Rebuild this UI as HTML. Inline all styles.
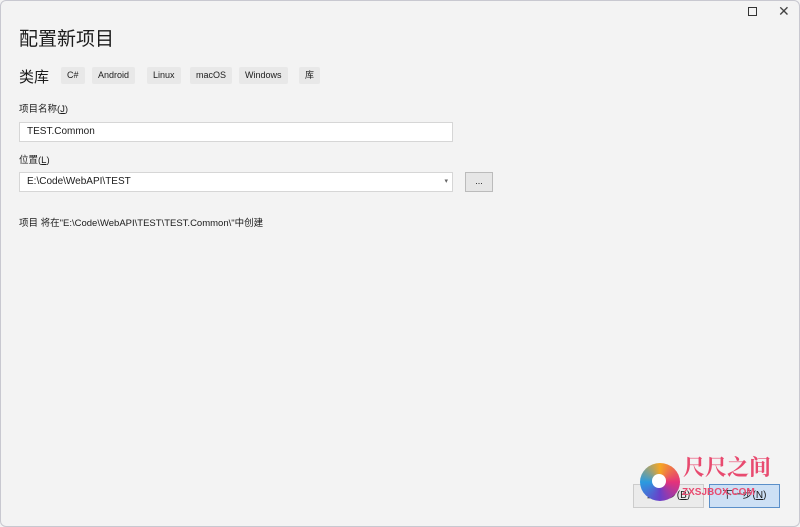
<!DOCTYPE html>
<html><head><meta charset="utf-8"><style>
*{margin:0;padding:0;box-sizing:border-box}
body{width:800px;height:527px;background:#f3f3f3;font-family:"Liberation Sans","Noto Sans CJK SC",sans-serif;color:#1b1b1b;position:relative;overflow:hidden}
.frame{position:absolute;left:0;top:0;width:800px;height:527px;border:1px solid #c8c8d0;border-radius:6px}
.a{position:absolute;white-space:nowrap}
.tag{position:absolute;top:67px;height:17px;background:#e8e8e8;font-size:9px;line-height:17px;padding:0 6px;border-radius:2px}
.in{position:absolute;left:19px;width:434px;height:20px;background:#fff;border:1px solid #d6d6d6;font-size:10px;line-height:18px;padding-left:7px}
</style></head><body>
<div class="frame"></div>
<div class="a" style="left:748px;top:7px;width:9px;height:9px;border:1px solid #333"></div>
<div class="a" style="left:778px;top:3px;font-size:14px;color:#444">✕</div>
<div class="a" style="left:19px;top:24px;font-size:19px">配置新项目</div>
<div class="a" style="left:19px;top:66px;font-size:15px">类库</div>
<div class="tag" style="left:61px">C#</div>
<div class="tag" style="left:92px">Android</div>
<div class="tag" style="left:147px">Linux</div>
<div class="tag" style="left:190px">macOS</div>
<div class="tag" style="left:239px">Windows</div>
<div class="tag" style="left:299px">库</div>
<div class="a" style="left:19px;top:101px;font-size:9.5px">项目名称(<u>J</u>)</div>
<div class="in" style="top:122px">TEST.Common</div>
<div class="a" style="left:19px;top:152px;font-size:9.5px">位置(<u>L</u>)</div>
<div class="in" style="top:172px">E:\Code\WebAPI\TEST<span style="position:absolute;right:4px;font-size:7px;color:#666">▾</span></div>
<div class="a" style="left:465px;top:172px;width:28px;height:20px;background:#e6e6e6;border:1px solid #bbb;font-size:9px;text-align:center;line-height:16px">...</div>
<div class="a" style="left:19px;top:215px;font-size:9.5px">项目 将在"E:\Code\WebAPI\TEST\TEST.Common\"中创建</div>
<div class="a" style="left:633px;top:484px;width:71px;height:24px;background:#ebebeb;border:1px solid #ccc;font-size:10px;text-align:center;line-height:22px">上一步(<u>B</u>)</div>
<div class="a" style="left:709px;top:484px;width:71px;height:24px;background:#cde0f5;border:1px solid #5b8fc9;font-size:10px;text-align:center;line-height:22px">下一步(<u>N</u>)</div>
<div class="a" style="left:640px;top:463px;width:40px;height:38px;border-radius:50%;background:conic-gradient(#f5a623,#e5327a,#6a3fc9,#2a9be0,#f5a623)"></div>
<div class="a" style="left:652px;top:474px;width:14px;height:14px;border-radius:50%;background:#fff"></div>
<div class="a" style="left:683px;top:451px;font-size:22px;color:#e84a6f;font-family:'Noto Serif CJK SC',serif;font-weight:bold">尺尺之间</div>
<div class="a" style="left:682px;top:487px;font-size:10px;color:#e84a6f;font-weight:bold">ZXSJBOX.COM</div>
</body></html>
